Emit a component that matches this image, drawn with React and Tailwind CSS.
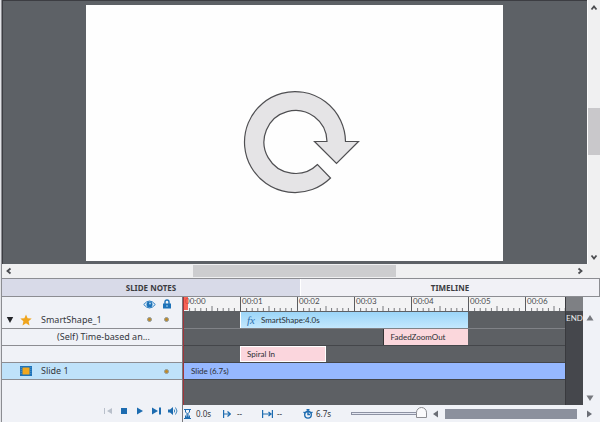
import React, { useState } from "react";

const DURATION = 6.7;
const pct = (seconds) => `${(seconds / DURATION) * 100}%`;

const MARKS = ["00:00", "00:01", "00:02", "00:03", "00:04", "00:05", "00:06"];

function Chevron({ className, d }) {
  return (
    <svg viewBox="0 0 8 8" className={className} fill="none" stroke="#4b4c50" strokeWidth="1.8">
      <path d={d} />
    </svg>
  );
}

function Stage() {
  return (
    <div className="flex flex-1 bg-[#5d6166]">
      <div className="flex flex-1 justify-center border-t border-l border-[#3c3d42] pt-1 pr-[84px] pb-[3px] pl-[83px]">
        <div className="flex h-[256px] w-full items-center justify-center bg-[#fefefe]">
          <svg viewBox="240 86 120 110" className="mt-4 ml-3 h-[110px] w-[120px]">
            <path
              d="M329.5 178 A50.5 50.5 0 1 1 344.5 141.5 H357.5 L335.5 163.5 L313.5 141.5 H326 A31.5 31.5 0 1 0 316.5 164.5 Z"
              fill="#e5e4e6"
              stroke="#4f4f52"
              strokeWidth="1.2"
            />
          </svg>
        </div>
      </div>
      <div className="flex w-[13px] flex-col items-center border-l border-white bg-[#f0f0f1] pt-1 pb-[3px]">
        <button aria-label="Scroll up">
          <Chevron className="block size-2" d="M1.5 5.5 L4 2.5 L6.5 5.5" />
        </button>
        <div className="mt-24 h-[47px] w-full bg-[#c9c8cb]" />
        <button aria-label="Scroll down" className="mt-auto">
          <Chevron className="block size-2" d="M1.5 2.5 L4 5.5 L6.5 2.5" />
        </button>
      </div>
    </div>
  );
}

function StageScrollbar() {
  return (
    <div className="flex h-[14px] items-center bg-[#f0f0f1] pr-4 pl-[3px]">
      <button aria-label="Scroll left">
        <Chevron className="block size-2" d="M5.5 1.5 L2.5 4 L5.5 6.5" />
      </button>
      <div className="flex flex-1 justify-center">
        <div className="h-3 w-[36%] bg-[#cdcdcf]" />
      </div>
      <button aria-label="Scroll right">
        <Chevron className="block size-2" d="M2.5 1.5 L5.5 4 L2.5 6.5" />
      </button>
    </div>
  );
}

function Tabs({ tab, onChange }) {
  return (
    <div role="tablist" className="flex h-[19px] border-y border-[#8c8d92] text-[8px] leading-4 font-bold text-[#3b3c40]">
      <button
        role="tab"
        aria-selected={tab === "notes"}
        onClick={() => onChange("notes")}
        className="flex-1 border-r border-white bg-[#d8dae8]"
      >
        SLIDE NOTES
      </button>
      <button
        role="tab"
        aria-selected={tab === "timeline"}
        onClick={() => onChange("timeline")}
        className="flex-1 border-r border-[#8c8d92] bg-[#f1f1f6]"
      >
        TIMELINE
      </button>
    </div>
  );
}

function Dot() {
  return (
    <span className="flex w-[17px] justify-center">
      <span className="size-[5px] rounded-full border border-[#8e9a9c] bg-[#c08a28]" />
    </span>
  );
}

function Layers() {
  return (
    <div className="flex w-[180px] shrink-0 flex-col text-[9px] leading-4 text-[#34373d]">
      <div className="flex h-[14px] items-center justify-end pr-[7px]">
        <button aria-label="Show or hide all" className="flex w-[17px] justify-center">
          <svg viewBox="0 0 13 9" className="h-[9px] w-[13px]">
            <path d="M.7 4.5 Q6.5 -2.5 12.3 4.5 Q6.5 11.5 .7 4.5 Z" fill="#e8f3fb" stroke="#2a7cc0" />
            <circle cx="6.5" cy="4.5" r="3" fill="#1d72b8" />
            <circle cx="7" cy="3.5" r=".9" fill="#b9dcf3" />
          </svg>
        </button>
        <button aria-label="Lock all" className="flex w-[17px] justify-center">
          <svg viewBox="0 0 8 10" className="h-[10px] w-2">
            <path d="M2 5 V3 Q2 1 4 1 Q6 1 6 3 V5" fill="none" stroke="#1d72b8" strokeWidth="1.4" />
            <rect y="4.5" width="8" height="5" fill="#1d72b8" />
            <path d="M4 6 V8" stroke="#a9d3ef" />
          </svg>
        </button>
      </div>
      <div className="flex h-[18px] items-center border-b border-[#8c8d92] pr-[7px] pl-1">
        <button aria-label="Collapse SmartShape_1">
          <svg viewBox="0 0 8 8" className="block size-2">
            <path d="M.8 1 H7.2 L4 7 Z" fill="#222428" />
          </svg>
        </button>
        <svg viewBox="0 0 12 12" className="mx-[6px] size-3">
          <path d="M6 .5 L7.6 4.2 L11.7 4.6 L8.6 7.3 L9.5 11.4 L6 9.3 L2.5 11.4 L3.4 7.3 L.3 4.6 L4.4 4.2 Z" fill="#efa51e" />
        </svg>
        <span className="flex-1 pl-[3px]">SmartShape_1</span>
        <Dot />
        <Dot />
      </div>
      <div className="h-[17px] border-b border-[#8c8d92] pl-[55px]">(Self) Time-based an...</div>
      <div className="h-[17px] border-b border-[#8c8d92]" />
      <div className="flex h-[17px] items-center border-b border-[#8c8d92] bg-[#bfe2fa] pr-[7px] pl-[18px]">
        <svg viewBox="0 0 12 10" className="h-[10px] w-3">
          <rect width="12" height="10" fill="#1d72b8" />
          <rect x="2.5" y="1.5" width="7" height="7" fill="#f0a71f" />
          <path d="M1.2 1 V9 M10.8 1 V9" stroke="#4d93cc" strokeDasharray="1 1" />
        </svg>
        <span className="flex-1 pl-[9px]">Slide 1</span>
        <Dot />
      </div>
      <div className="flex flex-1 items-end justify-end gap-[6px] pr-1 pb-[6px]">
        <button aria-label="Move to start">
          <svg viewBox="0 0 10 10" className="block size-[10px]" fill="#b9c0cb">
            <path d="M0 2 H1 V8 H0 Z M8 2 V8 L3 5 Z" />
          </svg>
        </button>
        <button aria-label="Stop">
          <svg viewBox="0 0 10 10" className="block size-[10px]" fill="#1d6cb0">
            <path d="M1 2 H7 V8 H1 Z" />
          </svg>
        </button>
        <button aria-label="Play">
          <svg viewBox="0 0 10 10" className="block size-[10px]" fill="#1d6cb0">
            <path d="M1 1.5 L7 5 L1 8.5 Z" />
          </svg>
        </button>
        <button aria-label="Move to end">
          <svg viewBox="0 0 10 10" className="block size-[10px]" fill="#1d6cb0">
            <path d="M0 1.5 L6 5 L0 8.5 Z M7 1.5 H9 V8.5 H7 Z" />
          </svg>
        </button>
        <button aria-label="Sound">
          <svg viewBox="0 0 10 10" className="block size-[10px]" fill="#1d6cb0">
            <path d="M0 3.5 H2 L5 1 V9 L2 6.5 H0 Z" />
            <path d="M6.2 3.5 Q7.2 5 6.2 6.5 M7.5 1.5 Q10.5 5 7.5 8.5" fill="none" stroke="#3f86bd" />
          </svg>
        </button>
      </div>
    </div>
  );
}

function Ruler() {
  return (
    <div className="flex h-[14px] overflow-hidden bg-[#f3f3f4]">
      {MARKS.map((mark) => (
        <div key={mark} className="flex shrink-0 flex-col justify-between border-l border-[#5b5c60]" style={{ width: pct(1) }}>
          <span className="pl-px text-[8px] leading-[8px] text-[#4b4c50]">{mark}</span>
          <svg className="block h-[5px] w-full" stroke="#77787c">
            {[1, 2, 3, 4, 5, 6, 7, 8, 9].map((n) => (
              <line key={n} x1={`${n * 10}%`} x2={`${n * 10}%`} y1={n === 5 ? 0 : 2} y2="5" />
            ))}
          </svg>
        </div>
      ))}
    </div>
  );
}

function Bar({ start, length, className, children }) {
  return (
    <div
      className={`flex h-4 items-center overflow-hidden whitespace-nowrap ${className}`}
      style={{ marginLeft: pct(start), width: pct(length) }}
    >
      {children}
    </div>
  );
}

function Tracks() {
  return (
    <div className="flex min-w-0 flex-1 flex-col bg-[#5d6064] font-['Lato',sans-serif] text-[8px] leading-4 text-[#2b2e34]">
      <Ruler />
      <div className="h-[18px] border-b border-[#808287] pt-px">
        <Bar start={1} length={4} className="border-l border-white bg-linear-to-b from-[#9bd5f8] to-[#c3e8fe] pl-[6px]">
          <span className="w-[14px] font-['Liberation_Serif',serif] text-[11px] text-[#2d6fae] italic">fx</span>
          <span>SmartShape:4.0s</span>
        </Bar>
      </div>
      <div className="h-[17px] border-b border-[#44464a]">
        <Bar start={3.5} length={1.5} className="border-l border-[#333] bg-[#fbd7dc] pl-[7px]">FadedZoomOut</Bar>
      </div>
      <div className="h-[17px] border-b border-[#44464a]">
        <Bar start={1} length={1.5} className="border border-white bg-[#fbd6dd] pl-[6px]">Spiral In</Bar>
      </div>
      <div className="h-[17px] border-b border-[#44464a]">
        <Bar start={0} length={DURATION} className="bg-[#96b8ff] pl-2">Slide (6.7s)</Bar>
      </div>
      <div className="h-[25px]" />
    </div>
  );
}

function Status() {
  return (
    <div className="flex h-[17px] items-center pr-1 pl-px text-[8px] leading-4 text-[#34373d]">
      <div className="flex w-[39px] items-center gap-[5px]">
        <svg viewBox="0 0 7 10" className="h-[10px] w-[7px]" fill="none" stroke="#1d6cb0">
          <path d="M0 .5 H7 M0 9.5 H7 M1.5 1 V3 L5.5 7 V9 M5.5 1 V3 L1.5 7 V9" />
          <path d="M2 9 L3.5 6.5 L5 9 Z" fill="#1d6cb0" />
        </svg>
        <span>0.0s</span>
      </div>
      <div className="flex w-[39px] items-center gap-[6px]">
        <svg viewBox="0 0 8 8" className="size-2" fill="none" stroke="#1d6cb0" strokeWidth="1.2">
          <path d="M.6 0 V8 M1 4 H7 M4.5 1.5 L7.3 4 L4.5 6.5" />
        </svg>
        <span>--</span>
      </div>
      <div className="flex w-[41px] items-center gap-1">
        <svg viewBox="0 0 11 8" className="h-2 w-[11px]" fill="none" stroke="#1d6cb0" strokeWidth="1.2">
          <path d="M.6 0 V8 M10.4 0 V8 M1 4 H9 M6.5 2 L9 4 L6.5 6" />
        </svg>
        <span>--</span>
      </div>
      <div className="flex w-12 items-center gap-[3px]">
        <svg viewBox="0 0 10 10" className="size-[10px]" fill="none" stroke="#1d6cb0" strokeWidth="1.4">
          <path d="M3.5 .8 H6.5 M5 1 V5.5 H7 M.5 3 L2 4 M9.5 3 L8 4" />
          <circle cx="5" cy="5.8" r="3.3" />
        </svg>
        <span>6.7s</span>
      </div>
      <input
        type="range"
        aria-label="Timeline zoom"
        defaultValue="100"
        className="h-3 w-[76px] appearance-none bg-transparent [&::-webkit-slider-runnable-track]:h-[3px] [&::-webkit-slider-runnable-track]:border [&::-webkit-slider-runnable-track]:border-r-0 [&::-webkit-slider-runnable-track]:border-[#8d92a3] [&::-webkit-slider-runnable-track]:bg-[#e4e7f2] [&::-webkit-slider-thumb]:-mt-[6px] [&::-webkit-slider-thumb]:h-[11px] [&::-webkit-slider-thumb]:w-[11px] [&::-webkit-slider-thumb]:appearance-none [&::-webkit-slider-thumb]:rounded-t-full [&::-webkit-slider-thumb]:rounded-b-sm [&::-webkit-slider-thumb]:border [&::-webkit-slider-thumb]:border-[#8c8d92] [&::-webkit-slider-thumb]:bg-[#fafafc]"
      />
      <button aria-label="Scroll timeline left" className="ml-[5px]">
        <svg viewBox="0 0 8 8" className="block size-2">
          <path d="M6 .5 V7.5 L1 4 Z" fill="#6b6e76" />
        </svg>
      </button>
      <div className="mr-2 ml-[5px] h-[10px] flex-1 bg-[#8b909d]" />
      <button aria-label="Scroll timeline right" className="mr-[3px]">
        <svg viewBox="0 0 8 8" className="block size-2">
          <path d="M2 .5 V7.5 L7 4 Z" fill="#6b6e76" />
        </svg>
      </button>
    </div>
  );
}

function Timeline() {
  return (
    <div className="flex bg-[#f0f2f7]">
      <Layers />
      <div className="flex min-w-0 flex-1 flex-col border-l border-[#77787c]">
        <div className="relative flex">
          <Tracks />
          <div className="flex w-[18px] flex-col border-l border-[#393a3e] bg-[#45474c] font-['Lato',sans-serif]">
            <div className="h-[14px] bg-[#7e8084]" />
            <span className="text-center text-[8px] leading-[14px] text-[#e8e9eb]">END</span>
          </div>
          <div className="flex w-[17px] flex-col justify-between bg-[#f0f2f7] pt-[17px] pb-[3px] pl-[3px]">
            <button aria-label="Scroll layers up">
              <svg viewBox="0 0 8 8" className="block size-2">
                <path d="M.5 6.5 H7.5 L4 1 Z" fill="#77797f" />
              </svg>
            </button>
            <button aria-label="Scroll layers down">
              <svg viewBox="0 0 8 8" className="block size-2">
                <path d="M.5 1.5 H7.5 L4 7 Z" fill="#77797f" />
              </svg>
            </button>
          </div>
          <div className="absolute inset-y-0 left-0 w-[5px] border-l border-[#a0343a]">
            <div className="h-[13px] bg-[#f5402f]/80" />
          </div>
        </div>
        <Status />
      </div>
    </div>
  );
}

export default function App() {
  const [tab, setTab] = useState("timeline");

  return (
    <main className="flex min-h-screen flex-col border-l border-[#e3e4e8] bg-[#f0f2f7] font-['Noto_Sans',sans-serif]">
      <div className="flex flex-1 flex-col border-l border-[#8c8d92]">
        <Stage />
        <StageScrollbar />
        <Tabs tab={tab} onChange={setTab} />
        <Timeline />
      </div>
    </main>
  );
}
